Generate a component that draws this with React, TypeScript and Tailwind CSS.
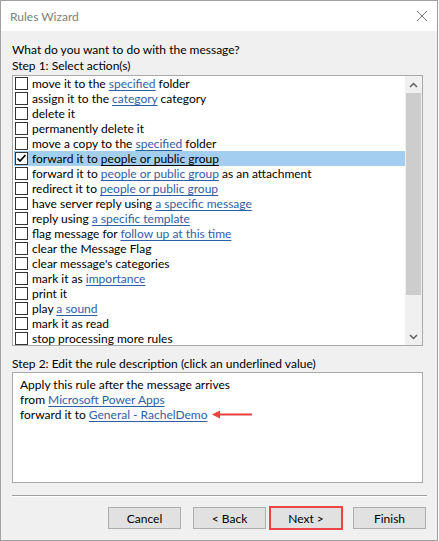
import React from "react";

type Part = string | { link: string };

const rows: Part[][] = [
  ["move it to the ", { link: "specified" }, " folder"],
  ["assign it to the ", { link: "category" }, " category"],
  ["delete it"],
  ["permanently delete it"],
  ["move a copy to the ", { link: "specified" }, " folder"],
  ["forward it to ", { link: "people or public group" }],
  ["forward it to ", { link: "people or public group" }, " as an attachment"],
  ["redirect it to ", { link: "people or public group" }],
  ["have server reply using ", { link: "a specific message" }],
  ["reply using ", { link: "a specific template" }],
  ["flag message for ", { link: "follow up at this time" }],
  ["clear the Message Flag"],
  ["clear message's categories"],
  ["mark it as ", { link: "importance" }],
  ["print it"],
  ["play ", { link: "a sound" }],
  ["mark it as read"],
  ["stop processing more rules"],
];

function Row({ parts, selected }: { parts: Part[]; selected?: boolean }) {
  return (
    <div className={"flex h-[15px] items-center whitespace-nowrap " + (selected ? "bg-[#a4cef0]" : "")}>
      <div className="ml-[1px] flex h-[13px] w-[13px] shrink-0 items-center justify-center border border-[#333333] bg-white">
        {selected && (
          <svg width="11" height="11" viewBox="0 0 11 11">
            <path d="M1.5 5.5 L4 8 L9.5 2" fill="none" stroke="#000" strokeWidth="1.7" />
          </svg>
        )}
      </div>
      <span className="ml-[4px]">
        {parts.map((p, i) =>
          typeof p === "string" ? (
            <span key={i}>{p}</span>
          ) : (
            <span key={i} className={"underline underline-offset-2 " + (selected ? "text-black" : "text-[#2f5ea6]")}>
              {p.link}
            </span>
          )
        )}
      </span>
    </div>
  );
}

function Btn({ label }: { label: string }) {
  return (
    <div className="flex h-[22px] w-[73px] items-center justify-center border border-[#adadad] bg-[#e1e1e1] text-black">
      {label}
    </div>
  );
}

export default function App() {
  return (
    <div
      className="flex h-[541px] w-[438px] flex-col border border-[#a0a0a0] bg-[#f0f0f0] text-[12px] leading-[15px] text-black"
      style={{ fontFamily: '"Segoe UI", Lato, sans-serif' }}
    >
      <div className="flex h-[30px] shrink-0 items-center justify-between bg-white pl-[9px] pr-[9px]">
        <span className="text-[12px] text-[#808080]">Rules Wizard</span>
        <svg width="12" height="12" viewBox="0 0 12 12">
          <path d="M1 1 L11 11 M11 1 L1 11" stroke="#7a7a7a" strokeWidth="1" />
        </svg>
      </div>
      <div className="flex flex-col px-[11px]">
        <div className="mt-[11px]">What do you want to do with the message?</div>
        <div className="mt-[1px]">Step 1: Select action(s)</div>
        <div className="mt-[2px] flex h-[271px] w-[411px] border border-[#a9a9a9] bg-white">
          <div className="flex flex-1 flex-col pl-[1px]">
            {rows.map((r, i) => (
              <Row key={i} parts={r} selected={i === 5} />
            ))}
          </div>
          <div className="flex w-[17px] flex-col bg-[#f0f0f0]">
            <div className="flex h-[17px] items-center justify-center">
              <svg width="9" height="6" viewBox="0 0 9 6">
                <path d="M1 5 L4.5 1.5 L8 5" fill="none" stroke="#606060" strokeWidth="1.5" />
              </svg>
            </div>
            <div className="mx-[1px] h-[202px] bg-[#cdcdcd]" />
            <div className="flex-1" />
            <div className="flex h-[17px] items-center justify-center">
              <svg width="9" height="6" viewBox="0 0 9 6">
                <path d="M1 1 L4.5 4.5 L8 1" fill="none" stroke="#606060" strokeWidth="1.5" />
              </svg>
            </div>
          </div>
        </div>
        <div className="mt-[10px]">Step 2: Edit the rule description (click an underlined value)</div>
        <div className="mt-[1px] flex h-[111px] w-[411px] flex-col border border-[#a9a9a9] bg-white pl-[7px] pt-[4px]">
          <div>Apply this rule after the message arrives</div>
          <div>
            from <span className="text-[#2f5ea6] underline underline-offset-2">Microsoft Power Apps</span>
          </div>
          <div className="flex items-center">
            <span>
              forward it to <span className="text-[#2f5ea6] underline underline-offset-2">General - RachelDemo</span>
            </span>
            <svg className="ml-[4px]" width="40" height="9" viewBox="0 0 40 9">
              <path d="M6 4.5 L40 4.5" stroke="#e8413f" strokeWidth="2" />
              <path d="M0 4.5 L8 0.5 L8 8.5 Z" fill="#e8413f" />
            </svg>
          </div>
        </div>
        <div className="mt-[12px] h-[2px] w-[415px] border-t border-[#a0a0a0] bg-white" />
        <div className="mt-[9px] flex items-center justify-end">
          <Btn label="Cancel" />
          <div className="ml-[12px]">
            <Btn label="< Back" />
          </div>
          <div className="ml-[3px] flex h-[24px] w-[74px] items-center justify-center border-2 border-[#ec4444] bg-[#e1e1e1]">
            Next &gt;
          </div>
          <div className="ml-[10px]">
            <Btn label="Finish" />
          </div>
        </div>
      </div>
    </div>
  );
}
